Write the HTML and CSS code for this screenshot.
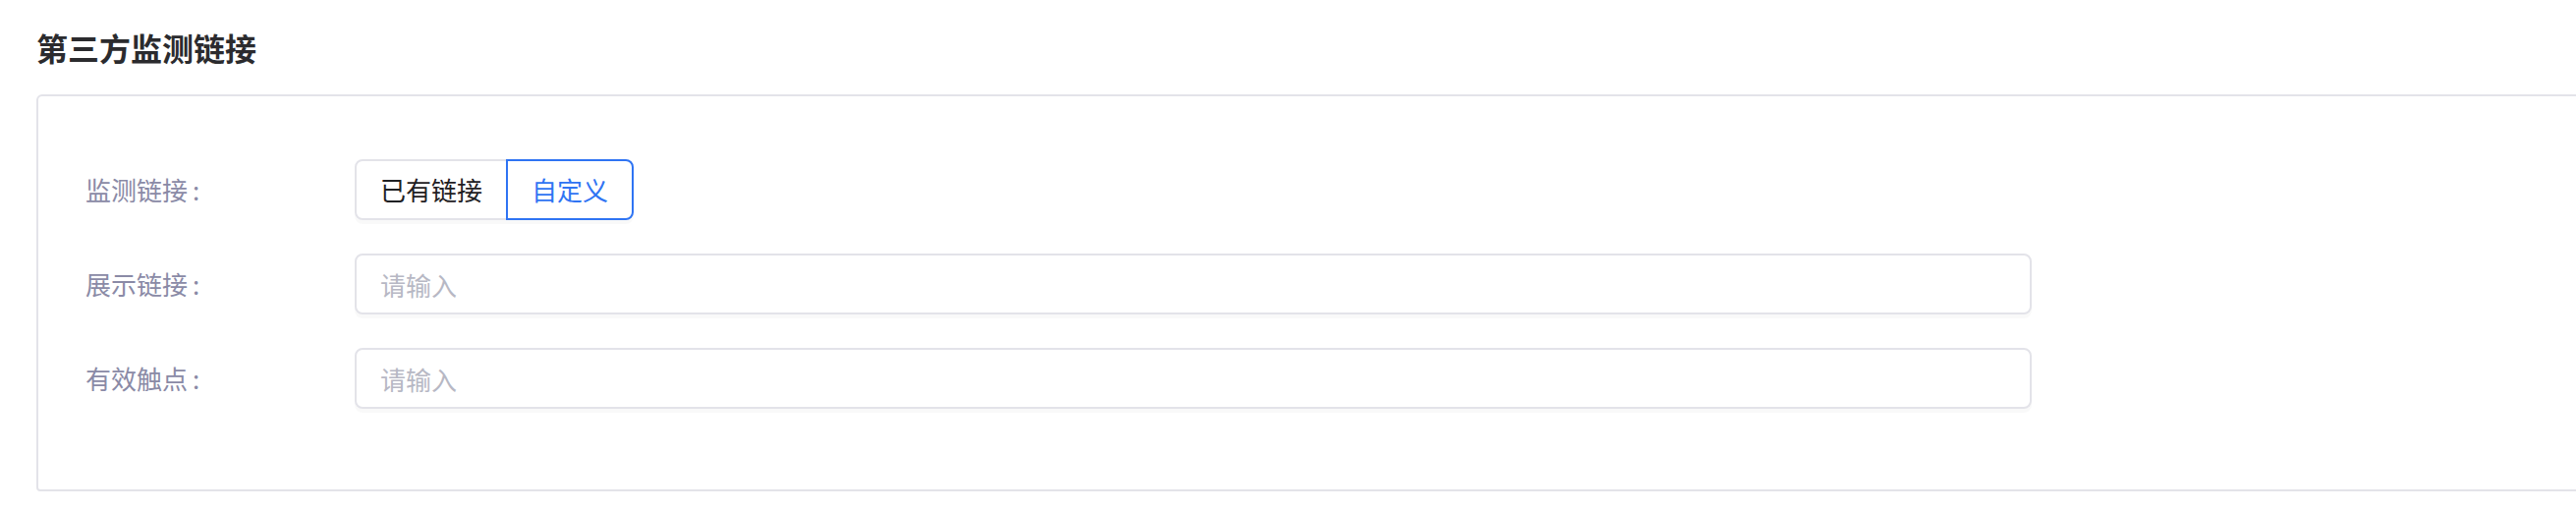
FILE: index.html
```html
<!DOCTYPE html>
<html lang="zh-CN">
<head>
    <meta charset="UTF-8">
    <meta name="viewport" content="width=device-width, initial-scale=1.0">
    <title>第三方监测链接</title>
    <link rel="stylesheet" href="styles.css">
</head>
<body>
    <div id="main">
        <h2 class="section-title">第三方监测链接</h2>
        <div class="card">
            <div class="form-row">
                <label class="form-label">监测链接</label>
                <div class="btn-group">
                    <button class="seg-btn" type="button">已有链接</button>
                    <button class="seg-btn active" type="button">自定义</button>
                </div>
            </div>
            <div class="form-row">
                <label class="form-label" for="show-link">展示链接</label>
                <input id="show-link" class="text-input" type="text" placeholder="请输入">
            </div>
            <div class="form-row">
                <label class="form-label" for="touch-point">有效触点</label>
                <input id="touch-point" class="text-input" type="text" placeholder="请输入">
            </div>
        </div>
    </div>
</body>
</html>
```

FILE: styles.css
```css
body {
    font-family: "Noto Sans CJK SC", "Noto Sans", sans-serif;
    background-color: #fff;
    margin: 0;
    padding: 0;
    overflow: hidden;
}

#main {
    padding: 24px 0 20px 37px;
}

.section-title {
    margin: 0 0 24px;
    font-size: 32px;
    line-height: 48px;
    font-weight: 600;
    color: #2b2b2e;
}

.card {
    margin-right: -20px;
    padding: 64px 0 82px 48px;
    border: 2px solid #e3e3e9;
    border-radius: 6px 0 0 4px;
}

.form-row {
    display: flex;
    align-items: center;
    margin-bottom: 34px;
}

.form-row:last-child {
    margin-bottom: 0;
}

.form-label {
    width: 274px;
    flex-shrink: 0;
    font-size: 26px;
    line-height: 36px;
    color: #8a8aa6;
}

.form-label::after {
    content: ":";
    margin-left: 5px;
}

.btn-group {
    display: flex;
    box-shadow: 0 4px 0 rgba(0, 0, 0, 0.025);
    border-radius: 8px;
}

.seg-btn {
    height: 62px;
    box-sizing: border-box;
    padding: 0 24px;
    font-family: inherit;
    font-size: 26px;
    line-height: 36px;
    color: #1f2023;
    background-color: #fff;
    border: 2px solid #e3e3e9;
    cursor: pointer;
}

.seg-btn:first-child {
    border-radius: 8px 0 0 8px;
}

.seg-btn:last-child {
    margin-left: -2px;
    border-radius: 0 8px 8px 0;
}

.seg-btn.active {
    position: relative;
    color: #2f74f3;
    border-color: #2f74f3;
}

.text-input {
    width: 1707px;
    height: 62px;
    box-sizing: border-box;
    padding: 0 24px;
    font-family: inherit;
    font-size: 26px;
    color: #1f2023;
    border: 2px solid #e3e3e9;
    border-radius: 8px;
    box-shadow: 0 4px 0 rgba(0, 0, 0, 0.025);
    outline: none;
}

.text-input::placeholder {
    color: #b7b8c4;
}
```
